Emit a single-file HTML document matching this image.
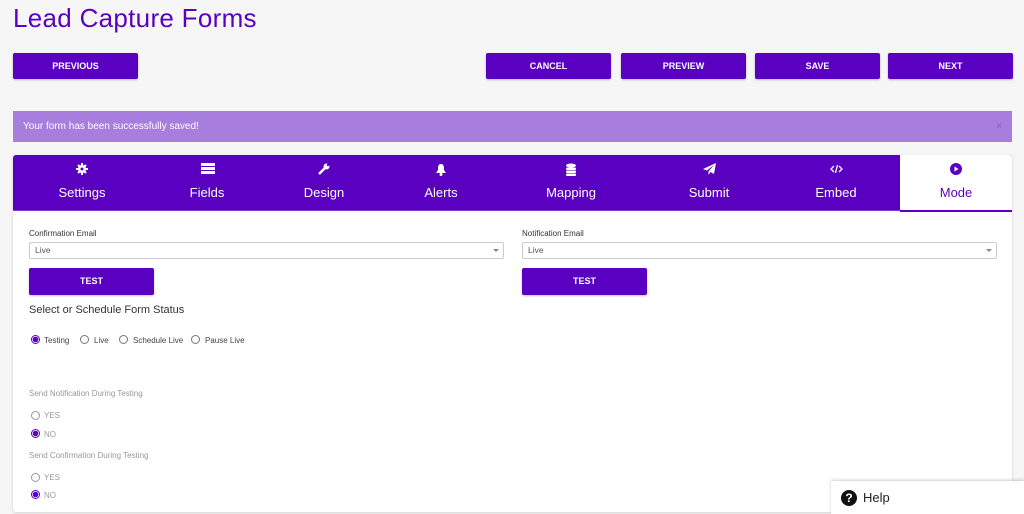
<!DOCTYPE html>
<html><head><style>
*{box-sizing:border-box;margin:0;padding:0}
body{width:1024px;height:514px;overflow:hidden;background:#f6f6f6;font-family:"Liberation Sans",sans-serif;position:relative}
.a{position:absolute}
.btn{position:absolute;background:#5a00c0;color:#fff;font-weight:bold;font-size:9px;text-align:center;border-radius:2px;height:26px;line-height:26px;width:125px;box-shadow:0 1px 2px rgba(0,0,0,.25)}
.tab{position:absolute;top:0;height:56px;width:120px;text-align:center;color:#fff}
.tab .t{position:absolute;top:30px;left:0;right:0;font-size:13px}
.tab svg{position:absolute;top:8px;left:54px}
.lbl{position:absolute;font-size:8px;color:#333}
.sel{position:absolute;height:17px;border:1px solid #ccc;border-radius:2px;background:#fff;font-size:8.5px;color:#555;padding-left:5px;line-height:15px}
.sel:after{content:"";position:absolute;right:4px;top:6px;border:3px solid transparent;border-top:3px solid #888}
.r{position:absolute;width:9px;height:9px;border:1px solid #777;border-radius:50%;background:#fff}
.r.on{border-color:#5a00c0;background:radial-gradient(circle,#5a00c0 0 2.5px,#fff 3px)}
.rt{position:absolute;font-size:8px;color:#444}
.g{color:#999}
</style></head><body>
<div class="a" style="left:13px;top:3px;font-size:26px;color:#5a00c0;letter-spacing:.3px">Lead Capture Forms</div>
<div class="btn" style="left:13px;top:53px">PREVIOUS</div>
<div class="btn" style="left:486px;top:53px">CANCEL</div>
<div class="btn" style="left:621px;top:53px">PREVIEW</div>
<div class="btn" style="left:755px;top:53px">SAVE</div>
<div class="btn" style="left:888px;top:53px">NEXT</div>
<div class="a" style="left:13px;top:111px;width:999px;height:31px;background:#a77ddd;color:#fff;font-size:10px;line-height:31px;padding-left:10px">Your form has been successfully saved!<span style="position:absolute;right:10px;color:#8e6cc0;font-weight:bold">×</span></div>
<div class="a" style="left:13px;top:155px;width:999px;height:357px;background:#fff;border-radius:3px;box-shadow:0 1px 3px rgba(0,0,0,.15)">
 <div class="a" style="left:0;top:0;width:999px;height:56px;background:#5a00c0;border-radius:3px 3px 0 0;border-bottom:1px solid #7a40d0"></div>
 <div class="tab" style="left:9px"><svg width="12" height="12" viewBox="0 0 12 12"><circle cx="6" cy="6" r="4" fill="#fff"/><circle cx="6" cy="6" r="1.5" fill="#5a00c0"/><path d="M6 0v3M6 9v3M0 6h3M9 6h3M2 2l2 2M8 8l2 2M10 2L8 4M2 10l2-2" stroke="#fff" stroke-width="2"/></svg><div class="t">Settings</div></div>
 <div class="tab" style="left:134px"><svg width="14" height="11" viewBox="0 0 14 11"><rect y="0" width="14" height="3" fill="#fff"/><rect y="4" width="14" height="3" fill="#fff"/><rect y="8" width="14" height="3" fill="#fff"/></svg><div class="t">Fields</div></div>
 <div class="tab" style="left:251px"><svg width="12" height="12" viewBox="0 0 12 12"><path d="M1 11L7 5" stroke="#fff" stroke-width="2.5"/><circle cx="8.5" cy="3.5" r="3" fill="#fff"/><circle cx="10" cy="2" r="1.2" fill="#5a00c0"/></svg><div class="t">Design</div></div>
 <div class="tab" style="left:368px"><svg width="12" height="13" viewBox="0 0 12 13"><path d="M6 1C3 1 3 4 3 7L1 10h10L9 7C9 4 9 1 6 1z" fill="#fff"/><circle cx="6" cy="11.5" r="1.5" fill="#fff"/></svg><div class="t">Alerts</div></div>
 <div class="tab" style="left:498px"><svg width="12" height="13" viewBox="0 0 12 13"><ellipse cx="6" cy="2.5" rx="5" ry="2" fill="#fff"/><rect x="1" y="4.5" width="10" height="2.5" rx="1" fill="#fff"/><rect x="1" y="7.5" width="10" height="2.5" rx="1" fill="#fff"/><rect x="1" y="10.5" width="10" height="2.5" rx="1" fill="#fff"/></svg><div class="t">Mapping</div></div>
 <div class="tab" style="left:636px"><svg width="13" height="12" viewBox="0 0 13 12"><path d="M13 0L0 6l4 1.5L11 2 5.5 8.5V12l2-3 3.5 2z" fill="#fff"/></svg><div class="t">Submit</div></div>
 <div class="tab" style="left:763px"><svg width="13" height="12" viewBox="0 0 13 12"><path d="M4 3L1 6l3 3M9 3l3 3-3 3M7.5 2L5.5 10" stroke="#fff" stroke-width="1.3" fill="none"/></svg><div class="t">Embed</div></div>
 <div class="a" style="left:887px;top:0;width:112px;height:55px;background:#fff;border-radius:0 3px 0 0"></div>
 <div class="tab" style="left:883px;color:#5a00c0"><svg width="12" height="12" viewBox="0 0 12 12"><circle cx="6" cy="6" r="6" fill="#5a00c0"/><path d="M4.5 3.5v5l4-2.5z" fill="#fff"/></svg><div class="t">Mode</div></div>
 <div class="a" style="left:887px;top:55px;width:112px;height:2px;background:#5a00c0"></div>
</div>
<div class="lbl" style="left:29px;top:229px">Confirmation Email</div>
<div class="sel" style="left:29px;top:242px;width:475px">Live</div>
<div class="btn" style="left:29px;top:268px;height:27px;line-height:27px">TEST</div>
<div class="lbl" style="left:522px;top:229px">Notification Email</div>
<div class="sel" style="left:522px;top:242px;width:475px">Live</div>
<div class="btn" style="left:522px;top:268px;height:27px;line-height:27px">TEST</div>
<div class="a" style="left:29px;top:304px;font-size:11px;color:#333">Select or Schedule Form Status</div>
<div class="r on" style="left:31px;top:335px"></div><div class="rt" style="left:44px;top:336px">Testing</div>
<div class="r" style="left:80px;top:335px"></div><div class="rt" style="left:94px;top:336px">Live</div>
<div class="r" style="left:119px;top:335px"></div><div class="rt" style="left:133px;top:336px">Schedule Live</div>
<div class="r" style="left:191px;top:335px"></div><div class="rt" style="left:205px;top:336px">Pause Live</div>
<div class="rt g" style="left:29px;top:389px">Send Notification During Testing</div>
<div class="r" style="left:31px;top:411px;border-color:#999"></div><div class="rt g" style="left:44px;top:411px">YES</div>
<div class="r on" style="left:31px;top:429px"></div><div class="rt g" style="left:44px;top:430px">NO</div>
<div class="rt g" style="left:29px;top:451px">Send Confirmation During Testing</div>
<div class="r" style="left:31px;top:473px;border-color:#999"></div><div class="rt g" style="left:44px;top:473px">YES</div>
<div class="r on" style="left:31px;top:490px"></div><div class="rt g" style="left:44px;top:491px">NO</div>
<div class="a" style="left:831px;top:481px;width:193px;height:33px;background:#fff;box-shadow:0 -1px 3px rgba(0,0,0,.2)">
 <div class="a" style="left:10px;top:9px;width:16px;height:16px;border-radius:50%;background:#111;color:#fff;font-weight:bold;font-size:12px;text-align:center;line-height:16px">?</div>
 <div class="a" style="left:32px;top:9px;font-size:13px;color:#222">Help</div>
</div>
</body></html>
